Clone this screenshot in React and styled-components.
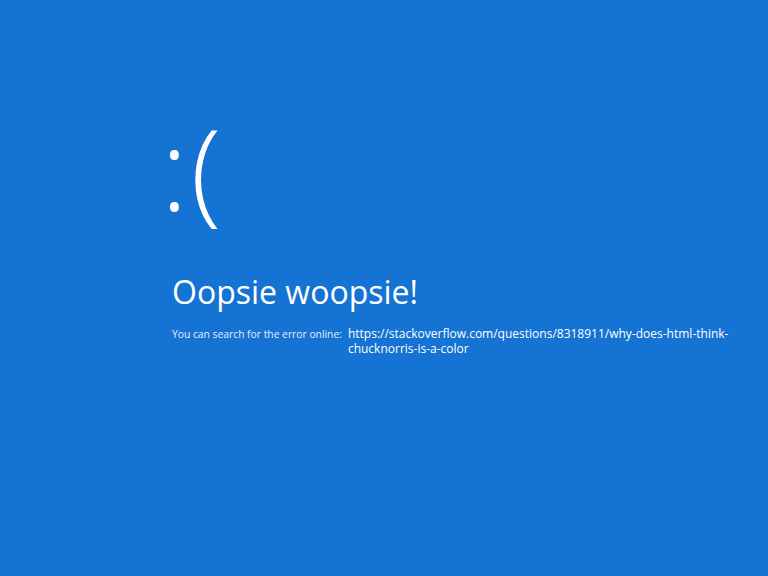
import React from "react";
import styled, { createGlobalStyle } from "styled-components";

const GlobalStyle = createGlobalStyle`
  html, body {
    margin: 0;
    padding: 0;
    background: #1473d3;
  }
  body {
    font-family: "Open Sans", "Noto Sans", sans-serif;
    color: #ffffff;
  }
`;

const App = () => {
  return (
    <Screen>
      <GlobalStyle />
      <Content>
        <Face>:(</Face>
        <Title>Oopsie woopsie!</Title>
        <Details>
          <Label>You can search for the error online:</Label>
          <Link>
            https://stackoverflow.com/questions/8318911/why-does-html-think-chucknorris-is-a-color
          </Link>
        </Details>
      </Content>
    </Screen>
  );
};

const Screen = styled.main`
  width: 768px;
  height: 576px;
  background: #1473d3;
  overflow: hidden;
`;

const Content = styled.section`
  padding: 106px 0 0 163px;
  display: flex;
  flex-direction: column;
`;

const Face = styled.div`
  margin-left: -2px;
  font-size: 112px;
  font-weight: 300;
  line-height: 123px;
  letter-spacing: 3px;
`;

const Title = styled.h1`
  margin: 41px 0 0 9px;
  font-size: 32px;
  font-weight: 400;
  line-height: 44px;
`;

const Details = styled.div`
  display: flex;
  gap: 6px;
  margin: 12px 0 0 9px;
`;

const Label = styled.span`
  font-size: 10.3px;
  line-height: 15px;
  padding-top: 1px;
  color: #e6f0fa;
  white-space: nowrap;
`;

const Link = styled.span`
  width: 400px;
  font-size: 12px;
  line-height: 15px;
`;

export default App;
